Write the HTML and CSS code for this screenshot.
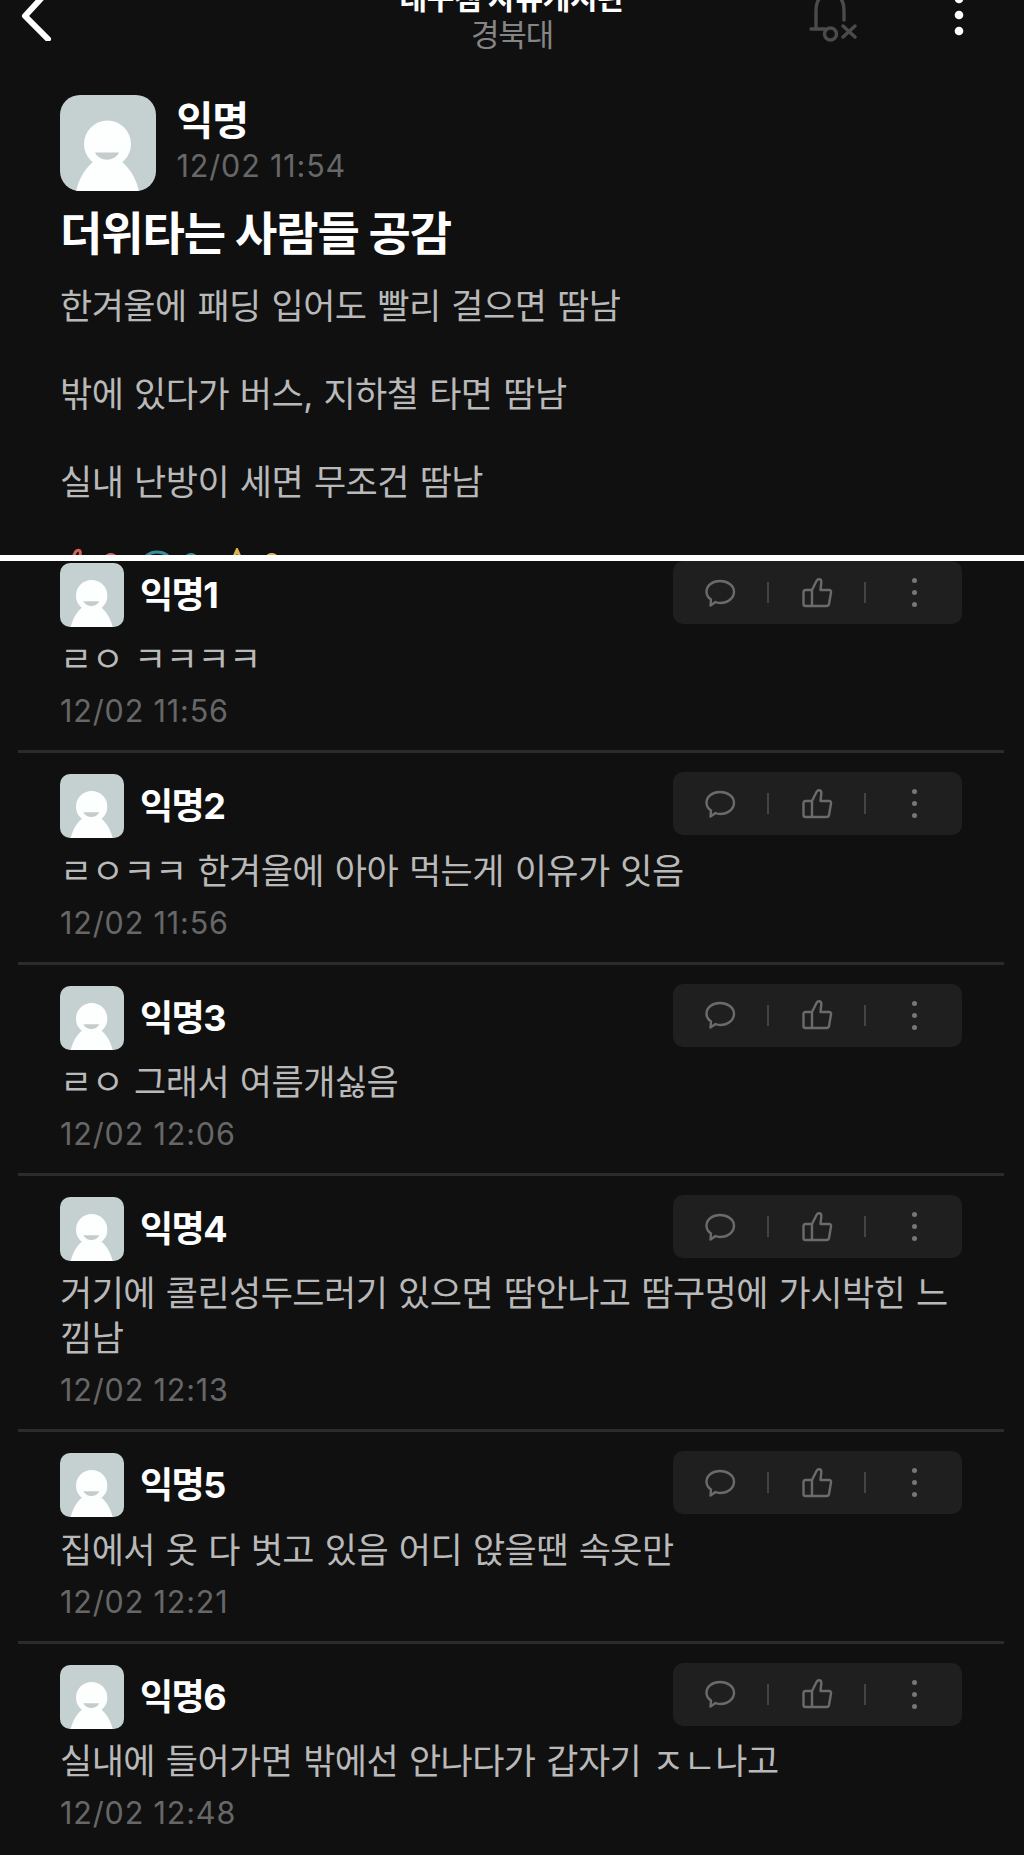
FILE: index.html
```
<!DOCTYPE html>
<html lang="ko">
<head>
<meta charset="utf-8">
<title>대구캠 자유게시판</title>
<link rel="stylesheet" href="styles.css">
</head>
<body>
<svg width="0" height="0" class="defs">
  <symbol id="face" viewBox="0 0 96 96">
    <circle cx="47.500" cy="49" r="23.500" fill="#fdfefe"/>
    <path d="M16 96C20 80 27 72 34 66H61C68 72 75 80 79 96Z" fill="#fdfefe"/>
    <path d="M35 57.500H59C55 67 39 67 35 57.500Z" fill="#c6cccc"/>
  </symbol>
  <symbol id="bubble" viewBox="0 0 32 32">
    <path d="M7 22.500C4 20.500 2.500 17.800 2.500 14.800C2.500 8.500 8.500 4 16 4S30 8.500 30 14.800S24 26 16 26C14 26 12.500 25.500 11.500 25L6.500 28.500Z"/>
  </symbol>
  <symbol id="thumb" viewBox="0 0 32 32">
    <path d="M11 13H4.500Q2.500 13 2.500 15V27Q2.500 29 4.500 29H9Q11 29 11 27ZM11 13L15.500 4Q16.500 2 18.500 2.200Q20.500 2.500 20.300 5.500L19.500 13H28Q30.500 13 30 15.500L28 27Q27.600 29 25.500 29H9"/>
  </symbol>
</svg>
<main class="screen">
  <section class="post">
    <header class="bar">
      <svg class="back" viewBox="0 0 32 56"><path d="M27 6L4 31L27 54" /></svg>
      <div class="heading"><h1>대구캠 자유게시판</h1><p>경북대</p></div>
      <div class="tools">
        <svg class="bell" viewBox="0 0 48 46"><path d="M2 29H16M7 29V11Q7 -6 21 -6T35 11V20"/><circle cx="21.500" cy="34" r="6"/><path d="M34 26L46 37M46 26L34 37"/></svg>
        <svg class="more" viewBox="0 0 10 40"><circle cx="5" cy="3" r="4.300"/><circle cx="5" cy="19" r="4.300"/><circle cx="5" cy="35" r="4.300"/></svg>
      </div>
    </header>
    <div class="author">
      <svg class="avatar large"><use href="#face"/></svg>
      <div><h2>익명</h2><time>12/02 11:54</time></div>
    </div>
    <h3>더위타는 사람들 공감</h3>
    <div class="body"><p>한겨울에 패딩 입어도 빨리 걸으면 땀남</p><p>밖에 있다가 버스, 지하철 타면 땀남</p><p>실내 난방이 세면 무조건 땀남</p></div>
    <div class="stats">
      <span class="red"><svg viewBox="0 0 32 32"><use href="#thumb"/></svg>0</span>
      <span class="teal"><svg viewBox="0 0 32 32"><use href="#bubble"/></svg>0</span>
      <span class="gold"><svg viewBox="0 0 32 32"><path d="M16 2L20 11L30 12L22 19L25 29L16 24L7 29L10 19L2 12L12 11Z"/></svg>0</span>
    </div>
  </section>
  <section class="comments" id="comments">
    <article><div class="top"><svg class="avatar"><use href="#face"/></svg><h4>익명1</h4><div class="actions"><svg><use href="#bubble"/></svg><i></i><svg><use href="#thumb"/></svg><i></i><b></b></div></div><p>ㄹㅇ ㅋㅋㅋㅋ</p><time>12/02 11:56</time></article>
    <article><div class="top"><svg class="avatar"><use href="#face"/></svg><h4>익명2</h4><div class="actions"><svg><use href="#bubble"/></svg><i></i><svg><use href="#thumb"/></svg><i></i><b></b></div></div><p>ㄹㅇㅋㅋ 한겨울에 아아 먹는게 이유가 잇음</p><time>12/02 11:56</time></article>
    <article><div class="top"><svg class="avatar"><use href="#face"/></svg><h4>익명3</h4><div class="actions"><svg><use href="#bubble"/></svg><i></i><svg><use href="#thumb"/></svg><i></i><b></b></div></div><p>ㄹㅇ 그래서 여름개싫음</p><time>12/02 12:06</time></article>
    <article><div class="top"><svg class="avatar"><use href="#face"/></svg><h4>익명4</h4><div class="actions"><svg><use href="#bubble"/></svg><i></i><svg><use href="#thumb"/></svg><i></i><b></b></div></div><p>거기에 콜린성두드러기 있으면 땀안나고 땀구멍에 가시박힌 느<br>낌남</p><time>12/02 12:13</time></article>
    <article><div class="top"><svg class="avatar"><use href="#face"/></svg><h4>익명5</h4><div class="actions"><svg><use href="#bubble"/></svg><i></i><svg><use href="#thumb"/></svg><i></i><b></b></div></div><p>집에서 옷 다 벗고 있음 어디 앉을땐 속옷만</p><time>12/02 12:21</time></article>
    <article><div class="top"><svg class="avatar"><use href="#face"/></svg><h4>익명6</h4><div class="actions"><svg><use href="#bubble"/></svg><i></i><svg><use href="#thumb"/></svg><i></i><b></b></div></div><p>실내에 들어가면 밖에선 안나다가 갑자기 ㅈㄴ나고</p><time>12/02 12:48</time></article>
  </section>
</main>
</body>
</html>
```
FILE: styles.css
```
* { box-sizing: border-box; margin: 0; padding: 0; }
body { background: #101010; font-family: Inter, "Noto Sans CJK KR", sans-serif; color: #b9b9b9; }
.defs { position: absolute; }
.screen { width: 1024px; height: 1855px; overflow: hidden; }
.post { height: 561px; overflow: hidden; border-bottom: 6px solid #fff; }
.bar { display: grid; grid-template-columns: 1fr 260px 1fr; height: 95px; }
.back { width: 32px; height: 56px; margin: -15px 0 0 21px; fill: none; stroke: #fff; stroke-width: 6; stroke-linecap: round; stroke-linejoin: round; }
.heading { text-align: center; white-space: nowrap; }
.heading h1 { font-size: 30px; line-height: 40px; margin-top: -22px; letter-spacing: -.300px; color: #fff; }
.heading p { margin-top: 1px; font-size: 31px; line-height: 32px; letter-spacing: -1.200px; color: #858585; }
.tools { display: flex; justify-content: flex-end; }
.bell { width: 48px; height: 46px; margin-right: 97px; fill: none; stroke: #4b4b4b; stroke-width: 3.400; stroke-linecap: round; }
.more { width: 10px; height: 40px; margin: -4px 60px 0 0; fill: #fff; }
.author { display: flex; gap: 20.500px; height: 96px; margin-left: 60px; }
.avatar { width: 64px; height: 64px; border-radius: 10px; background: #c5d0d0; flex: none; }
.avatar.large { width: 96px; height: 96px; border-radius: 20px; }
.author h2 { font-size: 40px; line-height: 48px; padding-top: 2px; letter-spacing: -1px; color: #fff; }
.author time { margin-top: -1px; }
time { display: block; font-size: 30.500px; line-height: 44px; color: #676767; letter-spacing: .850px; }
h3 { margin: 12px 0 0 60px; font-size: 46px; line-height: 60px; letter-spacing: -1.050px; color: #fff; white-space: nowrap; }
.body { margin: 0 0 0 60px; }
.body p, article p { font-size: 35px; line-height: 44.500px; letter-spacing: -.550px; word-spacing: 1.500px; white-space: nowrap; }
.body p { margin-top: 21px; margin-bottom: 43.700px; }
.stats { display: flex; margin: -1px 0 0 60px; font-size: 29px; line-height: 32px; }
.stats span { display: flex; gap: 9.500px; width: 80.500px; }
.stats svg { width: 32px; height: 32px; fill: none; stroke: currentColor; stroke-width: 3; }
.red { color: #d4615a; } .teal { color: #348f9c; } .gold { color: #e0b14d; }
.comments { padding-top: 1px; }
article { margin: 0 20px 0 18px; padding: 21px 42px 0 42px; border-bottom: 3px solid #2b2b2b; height: 211.350px; }
article:first-child { padding-top: 1px; height: 191.350px; }
article:nth-child(4) { height: 256.300px; }
article:last-child { border: 0; }
.top { display: flex; height: 64px; align-items: flex-start; }
h4 { font-size: 36px; line-height: 65px; margin-left: 16px; letter-spacing: -1.500px; color: #fff; }
.actions { margin: -2px 0 0 auto; width: 289px; height: 63px; border-radius: 10px; background: #1f1f1f; display: flex; align-items: center; padding-left: 31px; }
.actions svg { width: 32px; height: 32px; fill: none; stroke: #6b6b6b; stroke-width: 2.400; stroke-linejoin: round; }
.actions i { width: 2px; height: 21px; background: #444; margin: 0 32px 0 31px; }
.actions b { width: 5px; height: 5px; border-radius: 50%; background: #777; box-shadow: 0 -12px #777, 0 12px #777; margin-left: 14px; }
article p { margin-top: 10.300px; }
article time { margin-top: 7.700px; }
```
